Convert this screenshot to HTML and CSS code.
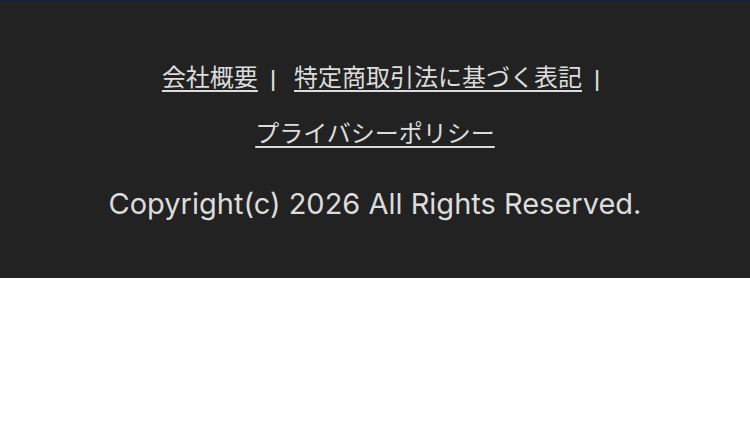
FILE: index.html
```html
<!DOCTYPE html>
<html lang="ja">
<head>
<meta charset="utf-8">
<link rel="stylesheet" href="styles.css">
</head>
<body>
<footer class="footer">
  <div class="topstrip"></div>
  <nav class="links">
    <a href="#" class="link link-first">会社概要</a><span class="sep">|</span><a href="#" class="link">特定商取引法に基づく表記</a><span class="sep">|</span>
    <a href="#" class="link">プライバシーポリシー</a>
  </nav>
  <p class="copy">Copyright(c) 2026 All Rights Reserved.</p>
</footer>
</body>
</html>
```
FILE: styles.css
```css
html, body {
  margin: 0;
  padding: 0;
  background: #ffffff;
}
.footer {
  background: #222222;
  height: 278px;
  box-sizing: border-box;
  color: #dcdcdc;
  font-family: "Noto Sans", "Noto Sans CJK JP", sans-serif;
  text-align: center;
  overflow: hidden;
}
.topstrip {
  height: 3px;
  background: linear-gradient(to bottom, #0d1f3f, #1a2233 60%, #222222);
}
.links {
  width: 520px;
  margin: 0 auto;
  padding-top: 46px;
  font-size: 24px;
  line-height: 56px;
}
.link {
  color: #dcdcdc;
  white-space: nowrap;
  text-decoration: underline;
  text-underline-offset: 4px;
  text-decoration-thickness: 2px;
}
.link-first {
  margin-left: 30px;
}
.sep {
  display: inline-block;
  margin: 0 15px 0 9px;
  font-size: 22px;
  font-weight: 600;
}
.copy {
  margin: 23px 0 0;
  font-family: "Inter", "Noto Sans", sans-serif;
  font-size: 29px;
  line-height: 40px;
}
```
